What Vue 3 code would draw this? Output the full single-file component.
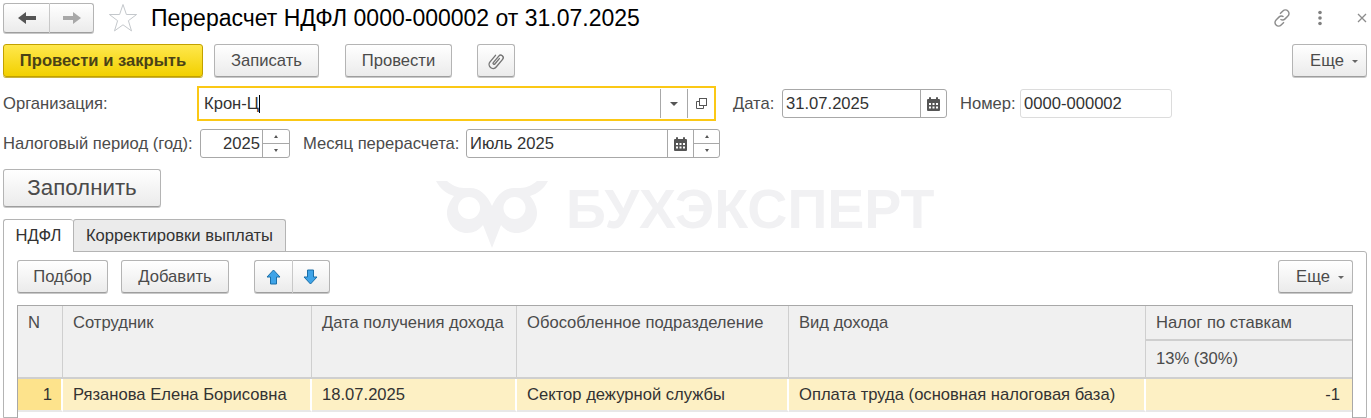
<template>
  <div class="page">
    <div class="watermark">
      <svg class="owl" width="112" height="67" viewBox="0 0 112 67">
        <path d="M0 0h11c5 4 10 7 17 7h6c10 0 17 7 22 18 5-11 12-18 22-18h6c7 0 12-3 17-7h11c-4 8-11 13-18 15 5 6 7 12 7 17 0 11-9 20-20 20-7 0-12-3-16-8l-9 23-9-23c-4 5-9 8-16 8-11 0-20-9-20-20 0-5 2-11 7-17C11 13 4 8 0 0z" fill="#f1f1f3" />
        <circle cx="33" cy="27" r="11" fill="#fff" />
        <circle cx="78.500" cy="27" r="11" fill="#fff" />
      </svg>
      <span>БУХЭКСПЕРТ</span>
    </div>

    <div class="title-row">
      <div class="btn-group nav">
        <button class="btn nav-btn">
          <svg width="18" height="14" viewBox="0 0 18 14"><path d="M0 7l8-6v4h10v4H8v4z" fill="#555" /></svg>
        </button>
        <button class="btn nav-btn">
          <svg width="18" height="14" viewBox="0 0 18 14"><path d="M18 7l-8-6v4H0v4h10v4z" fill="#a8a8a8" /></svg>
        </button>
      </div>
      <svg class="star" width="30" height="30" viewBox="0 0 30 30">
        <path d="M15 1.500l3.400 10h10.200l-8.200 6.200 3.100 10.200L15 21.800l-8.500 6.100 3.100-10.200-8.200-6.200h10.200z" fill="#fff" stroke="#c4c8cc" />
      </svg>
      <h1 class="title">Перерасчет НДФЛ 0000-000002 от 31.07.2025</h1>
      <div class="window-tools">
        <svg class="tool-link" width="22" height="22" viewBox="0 0 20 20" fill="none" stroke="#8c8c8c" stroke-width="1.300">
          <path d="M8.200 6.200l2.600-2.600a3.200 3.200 0 0 1 4.600 0 3.200 3.200 0 0 1 0 4.600l-2.600 2.600a3.200 3.200 0 0 1-4.200.3" />
          <path d="M11.800 13.800l-2.600 2.600a3.200 3.200 0 0 1-4.600 0 3.200 3.200 0 0 1 0-4.600l2.600-2.600a3.200 3.200 0 0 1 4.200-.3" />
        </svg>
        <svg class="tool-dots" width="6" height="16" viewBox="0 0 6 16" fill="#808080">
          <circle cx="3" cy="2.500" r="1.800" /><circle cx="3" cy="8" r="1.800" /><circle cx="3" cy="13.500" r="1.800" />
        </svg>
        <svg class="tool-close" width="10" height="10" viewBox="0 0 10 10" stroke="#8c8c8c" stroke-width="1.300"><path d="M1 1l8 8M9 1l-8 8" /></svg>
      </div>
    </div>

    <div class="command-row">
      <button class="btn primary">Провести и закрыть</button>
      <button class="btn write">Записать</button>
      <button class="btn post">Провести</button>
      <button class="btn clip">
        <svg width="20" height="20" viewBox="0 0 14 20" fill="none" stroke="#757575" stroke-width="1.400" stroke-linecap="round">
          <path d="M3 6v8.500a4 4 0 0 0 8 0V4.500a2.500 2.500 0 0 0-5 0V13a1 1 0 0 0 2 0V6" transform="rotate(40 7 10)" />
        </svg>
      </button>
      <button class="btn more">Еще<i class="caret"></i></button>
    </div>

    <div class="org-row">
      <label class="lbl org-lbl">Организация:</label>
      <div class="field org-field">
        <span class="field-text">Крон-Ц<i class="cursor"></i></span>
        <span class="org-btn"><i class="caret dark"></i></span>
        <span class="org-btn">
          <svg width="11" height="11" viewBox="0 0 11 11" fill="#fff" stroke="#555"><rect x="3.500" y=".5" width="7" height="7" /><path d="M3.500 3.500H.5v7h7V7.500" fill="none" /></svg>
        </span>
      </div>
      <label class="lbl date-lbl">Дата:</label>
      <div class="field date-field">
        <span class="field-text">31.07.2025</span>
        <span class="field-btn cal"><svg width="13" height="14" viewBox="0 0 13 14"><path d="M1 2h11a1 1 0 0 1 1 1v10a1 1 0 0 1-1 1H1a1 1 0 0 1-1-1V3a1 1 0 0 1 1-1z" fill="#555" /><rect x="2" y="0" width="2" height="3" rx="1" fill="#555" /><rect x="9" y="0" width="2" height="3" rx="1" fill="#555" /><path d="M2 6h2v2H2zM5.500 6h2v2h-2zM9 6h2v2H9zM2 9.500h2v2H2zM5.500 9.500h2v2h-2zM9 9.500h2v2H9z" fill="#fff" /></svg></span>
      </div>
      <label class="lbl num-lbl">Номер:</label>
      <div class="field num-field"><span class="field-text">0000-000002</span></div>
    </div>

    <div class="period-row">
      <label class="lbl period-lbl">Налоговый период (год):</label>
      <div class="field year-field">
        <span class="field-text right">2025</span>
        <span class="spin"><span><i class="caret up"></i></span><span><i class="caret small"></i></span></span>
      </div>
      <label class="lbl month-lbl">Месяц перерасчета:</label>
      <div class="field month-field">
        <span class="field-text">Июль 2025</span>
        <span class="field-btn cal"><svg width="13" height="14" viewBox="0 0 13 14"><path d="M1 2h11a1 1 0 0 1 1 1v10a1 1 0 0 1-1 1H1a1 1 0 0 1-1-1V3a1 1 0 0 1 1-1z" fill="#555" /><rect x="2" y="0" width="2" height="3" rx="1" fill="#555" /><rect x="9" y="0" width="2" height="3" rx="1" fill="#555" /><path d="M2 6h2v2H2zM5.500 6h2v2h-2zM9 6h2v2H9zM2 9.500h2v2H2zM5.500 9.500h2v2h-2zM9 9.500h2v2H9z" fill="#fff" /></svg></span>
        <span class="spin"><span><i class="caret up"></i></span><span><i class="caret small"></i></span></span>
      </div>
    </div>

    <button class="btn fill">Заполнить</button>

    <div class="tabs">
      <div class="tab active">НДФЛ</div>
      <div class="tab">Корректировки выплаты</div>
    </div>

    <div class="panel">
      <div class="panel-bar">
        <button class="btn pick">Подбор</button>
        <button class="btn add">Добавить</button>
        <div class="btn-group arrows">
          <button class="btn arrow-btn">
            <svg width="15" height="16" viewBox="0 0 15 16"><path d="M7.500 1L14 8h-3.500v7h-6V8H1z" fill="#3fa4e8" stroke="#1b6fa8" /></svg>
          </button>
          <button class="btn arrow-btn">
            <svg width="15" height="16" viewBox="0 0 15 16"><path d="M7.500 15L14 8h-3.500V1h-6v7H1z" fill="#3fa4e8" stroke="#1b6fa8" /></svg>
          </button>
        </div>
        <button class="btn more inner">Еще<i class="caret"></i></button>
      </div>

      <div class="grid">
        <div class="head-cell tall" v-for="title in columns" :key="title">{{ title }}</div>
        <div class="head-cell tax-head">Налог по ставкам</div>
        <div class="head-cell tax-sub">13% (30%)</div>
        <template v-for="row in rows" :key="row.n">
          <div class="cell num-cell">{{ row.n }}</div>
          <div class="cell">{{ row.name }}</div>
          <div class="cell">{{ row.date }}</div>
          <div class="cell">{{ row.unit }}</div>
          <div class="cell">{{ row.kind }}</div>
          <div class="cell tax-cell">{{ row.tax }}</div>
        </template>
      </div>
    </div>
  </div>
</template>

<script setup>
const columns = ['N', 'Сотрудник', 'Дата получения дохода', 'Обособленное подразделение', 'Вид дохода']

const rows = [
  {
    n: 1,
    name: 'Рязанова Елена Борисовна',
    date: '18.07.2025',
    unit: 'Сектор дежурной службы',
    kind: 'Оплата труда (основная налоговая база)',
    tax: '-1',
  },
]
</script>

<style>
html,
body {
  margin: 0;
  background: #fff;
  overflow: hidden;
}
</style>

<style scoped>
.page {
  position: relative;
  width: 1371px;
  height: 418px;
  overflow: hidden;
  box-sizing: border-box;
  padding: 3px 4px 0 3px;
  font-family: "Liberation Sans", Arial, sans-serif;
  font-size: 16.6px;
  color: #4b4b4b;
  background: #fff;
}

.watermark {
  position: absolute;
  left: 436px;
  top: 181px;
  display: flex;
  align-items: flex-start;
  gap: 18px;
  color: #f1f1f3;
  font-size: 55.5px;
  font-weight: 700;
  line-height: 56px;
}

.title-row {
  display: flex;
  align-items: center;
  height: 30px;
}

.btn {
  box-sizing: border-box;
  margin: 0;
  padding: 0;
  font: inherit;
  color: #4b4b4b;
  border: 1px solid #b4b4b4;
  border-bottom-color: #9e9e9e;
  border-radius: 3px;
  background: linear-gradient(#fff, #ebebeb);
  box-shadow: 0 1px 0 #c8c8c8;
  display: flex;
  align-items: center;
  justify-content: center;
}

.btn-group {
  display: flex;
}

.btn-group .btn:first-child {
  border-right: 0;
  border-radius: 3px 0 0 3px;
}

.btn-group .btn:last-child {
  border-radius: 0 3px 3px 0;
}

.nav-btn {
  width: 46px;
  height: 30px;
}

.nav-btn:last-child {
  width: 45px;
  border-left: 1px solid #c8c8c8;
}

.star {
  margin-left: 14px;
}

.title {
  margin: 0 0 0 13px;
  font-size: 23px;
  font-weight: 400;
  color: #000;
  line-height: 30px;
}

.window-tools {
  margin-left: auto;
  display: flex;
  align-items: center;
}

.tool-dots {
  margin-left: 24px;
}

.tool-close {
  margin-left: 34px;
}

.command-row {
  display: flex;
  align-items: center;
  height: 33px;
  margin-top: 11px;
}

.command-row .btn,
.panel-bar .btn {
  height: 33px;
  padding-top: 1px;
}

.primary {
  width: 200px;
  font-weight: 700;
  background: linear-gradient(#ffe84d, #f2d000);
  border-color: #c2a100;
  box-shadow: 0 1px 0 #c8b23c;
  color: #4a4216;
}

.write {
  width: 105px;
  margin-left: 11px;
}

.post {
  width: 107px;
  margin-left: 26px;
}

.clip {
  width: 38px;
  margin-left: 25px;
}

.more {
  width: 75px;
  margin-left: auto;
  gap: 8px;
  padding-left: 9px;
}

.caret {
  display: inline-block;
  width: 0;
  height: 0;
  border-left: 3px solid transparent;
  border-right: 3px solid transparent;
  border-top: 3px solid #666;
}

.caret.dark {
  border-left-width: 4px;
  border-right-width: 4px;
  border-top: 4px solid #555;
}

.caret.small {
  border-left-width: 2.5px;
  border-right-width: 2.5px;
  border-top: 3px solid #555;
}

.caret.up {
  border-left-width: 2.5px;
  border-right-width: 2.5px;
  border-top: 0;
  border-bottom: 3px solid #555;
}

.lbl {
  white-space: nowrap;
}

.org-row {
  display: flex;
  align-items: center;
  height: 35px;
  margin-top: 9px;
}

.org-lbl {
  width: 194px;
}

.field {
  box-sizing: border-box;
  display: flex;
  align-items: stretch;
  height: 29px;
  border: 1px solid #a8a8a8;
  border-radius: 3px;
  background: #fff;
  color: #333;
}

.field-text {
  flex: 1;
  display: flex;
  align-items: center;
  padding-left: 3px;
  white-space: nowrap;
}

.field-text.right {
  justify-content: flex-end;
  padding: 0 2px 0 0;
}

.org-field {
  width: 519px;
  height: 35px;
  padding: 1px 0;
  border: 2.5px solid #fbc815;
  border-radius: 0;
}

.org-field .field-text {
  padding-left: 5px;
}

.cursor {
  display: inline-block;
  width: 1px;
  height: 18px;
  background: #000;
}

.org-btn {
  width: 26px;
  display: flex;
  align-items: center;
  justify-content: center;
  border-left: 1px solid #a8a8a8;
}

.org-btn:last-child {
  width: 26px;
}

.date-lbl {
  margin-left: 17px;
  width: 49px;
}

.date-field {
  width: 165px;
}

.field-btn {
  display: flex;
  align-items: center;
  justify-content: center;
  border-left: 1px solid #a8a8a8;
}

.cal {
  width: 25px;
}

.num-lbl {
  margin-left: 13px;
  width: 60px;
}

.num-field {
  width: 152px;
  border-color: #dcdcdc;
}

.period-row {
  display: flex;
  align-items: center;
  height: 29px;
  margin-top: 8px;
}

.period-lbl {
  width: 197px;
}

.year-field {
  width: 90px;
}

.spin {
  width: 26px;
  display: flex;
  flex-direction: column;
  border-left: 1px solid #a8a8a8;
}

.spin span {
  flex: 1;
  display: flex;
  align-items: center;
  justify-content: center;
}

.spin span + span {
  border-top: 1px solid #a8a8a8;
}

.month-lbl {
  margin-left: 13px;
  width: 163px;
}

.month-field {
  width: 254px;
}

.month-field .spin {
  width: 25px;
}

.fill {
  width: 158px;
  height: 38px;
  margin-top: 11px;
  font-size: 22.3px;
}

.tabs {
  position: relative;
  display: flex;
  align-items: flex-end;
  height: 32px;
  margin-top: 12px;
}

.tab {
  box-sizing: border-box;
  display: flex;
  align-items: center;
  justify-content: center;
  width: 213px;
  height: 32px;
  border: 1px solid #b4b4b4;
  border-bottom: 0;
  border-radius: 3px 3px 0 0;
  background: #ebebeb;
  color: #333;
}

.tab.active {
  position: relative;
  z-index: 1;
  width: 70px;
  height: 33px;
  margin-bottom: -1px;
  background: #fff;
  border-right: 0;
}

.panel {
  position: relative;
  box-sizing: border-box;
  height: 167px;
  padding: 8px 13px 0;
  border: 1px solid #b4b4b4;
  border-radius: 0 3px 0 0;
}

.panel-bar {
  display: flex;
  align-items: center;
}

.pick {
  width: 91px;
}

.add {
  width: 108px;
  margin-left: 13px;
}

.arrows {
  margin-left: 25px;
}

.arrow-btn {
  width: 38px;
}

.arrow-btn:last-child {
  border-left: 1px solid #c8c8c8;
  padding-right: 2px;
}

.grid {
  display: grid;
  grid-template-columns: 45px 249px 205px 272px 357px 1fr;
  grid-template-rows: 35px 38px 33px 1fr;
  height: 122px;
  margin-top: 12px;
  border: 1px solid #a8a8a8;
  border-bottom: 0;
  box-sizing: border-box;
  background: #fff;
}

.head-cell {
  box-sizing: border-box;
  padding: 7px 0 0 10px;
  background: #f0f0f0;
  border-right: 1px solid #cfcfcf;
  border-bottom: 2px solid #cfcfcf;
  color: #4b4b4b;
  white-space: nowrap;
}

.head-cell.tall {
  grid-row: span 2;
}

.tax-head {
  grid-column: 6;
  grid-row: 1;
  border-right: 0;
}

.tax-sub {
  grid-column: 6;
  grid-row: 2;
  padding-top: 8px;
  border-right: 0;
}

.cell {
  box-sizing: border-box;
  display: flex;
  align-items: center;
  padding-left: 10px;
  background: #fdf0c4;
  border-right: 2px solid #fff;
  border-bottom: 2px solid #e8e8e8;
  color: #333;
  white-space: nowrap;
}

.num-cell {
  justify-content: flex-end;
  padding: 0 9px 0 0;
  background: #fde38c;
}

.tax-cell {
  justify-content: flex-end;
  padding: 0 12px 0 0;
  border-right: 0;
}
</style>
